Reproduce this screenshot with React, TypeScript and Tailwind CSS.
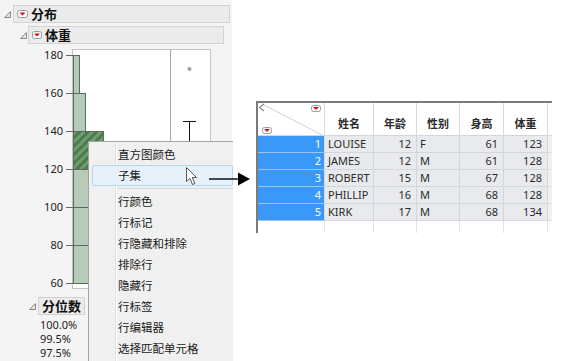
import React from 'react';

const cjk = "font-['Noto_Sans','Noto_Sans_CJK_SC',sans-serif]";

function Disclosure() {
  return (
    <svg width="7" height="7" viewBox="0 0 7 7" className="shrink-0">
      <polygon points="6.5,0.5 6.5,6.5 0.5,6.5" fill="#e4e4e4" stroke="#8a8a8a" strokeWidth="1" />
    </svg>
  );
}

function RedDrop({ w = 11, h = 8 }: { w?: number; h?: number }) {
  return (
    <svg width={w} height={h} viewBox={`0 0 ${w} ${h}`} className="shrink-0">
      <rect x="0.5" y="0.5" width={w - 1} height={h - 1} rx="2" fill="#fff" stroke="#9a9a9a" />
      <polygon points={`${w / 2 - 3},${h / 2 - 1.5} ${w / 2 + 3},${h / 2 - 1.5} ${w / 2},${h / 2 + 1.5}`} fill="#d8101a" />
    </svg>
  );
}

// plot drawn in svg coords (page y - 44)
function Plot() {
  const y = (v: number) => 283 - (v - 60) * 1.9 - 44;
  const ticks = [180, 160, 140, 120, 100, 80, 60];
  return (
    <svg width="232" height="253" className="block shrink-0">
      <defs>
        <pattern id="hatch" width="6" height="6" patternUnits="userSpaceOnUse" patternTransform="rotate(45)">
          <rect width="6" height="6" fill="#4d7a4f" />
          <rect width="3" height="6" fill="#719c71" />
        </pattern>
      </defs>
      <rect x="72.5" y="5.5" width="138" height="239" fill="#fff" stroke="#c4c4c4" />
      <line x1="170.5" y1="5" x2="170.5" y2="244" stroke="#a8a8a8" />
      {ticks.map(t => (
        <g key={t}>
          <line x1="66" y1={y(t) + 0.5} x2="73" y2={y(t) + 0.5} stroke="#666" />
          <text x="63" y={y(t) + 4} textAnchor="end" fontSize="11" fill="#222" fontFamily="Noto Sans, sans-serif">{t}</text>
        </g>
      ))}
      <g stroke="#5b6b5b" strokeWidth="1" fill="#b8cab8">
        <rect x="73.5" y={y(180) + 0.5} width="6" height={y(160) - y(180)} />
        <rect x="73.5" y={y(160) + 0.5} width="12" height={y(140) - y(160)} />
        <rect x="73.5" y={y(120) + 0.5} width="40" height={y(100) - y(120)} />
        <rect x="73.5" y={y(100) + 0.5} width="50" height={y(80) - y(100)} />
        <rect x="73.5" y={y(80) + 0.5} width="30" height={y(60) - y(80)} />
        <rect x="73.5" y={y(140) + 0.5} width="30" height={y(120) - y(140)} fill="url(#hatch)" />
      </g>
      <circle cx="189.5" cy={69 - 44} r="2" fill="#a0a0a0" />
      <line x1="183" y1={121.5 - 44} x2="196" y2={121.5 - 44} stroke="#111" />
      <line x1="189.5" y1={121 - 44} x2="189.5" y2={150 - 44} stroke="#111" />
    </svg>
  );
}

const menuItems = ['直方图颜色', '子集'];
const menuItems2 = ['行颜色', '行标记', '行隐藏和排除', '排除行', '隐藏行', '行标签', '行编辑器', '选择匹配单元格'];

function ContextMenu() {
  return (
    <div className={`absolute left-[88px] top-[141px] w-[145px] h-[220px] bg-[#f0f0f0] border-l border-t border-[#a3a3a3] pt-[2px] text-[11.5px] text-[#1a1a1a] ${cjk}`}>
      <div className="absolute left-[26px] top-0 bottom-0 w-px bg-[#e0e0e0]" />
      <div className="absolute left-[27px] top-0 bottom-0 w-px bg-white" />
      {menuItems.map((m, i) => (
        <div
          key={m}
          className={`relative h-[21px] flex items-center ml-[3px] rounded-[2px] ${i === 1 ? 'bg-[#e6f1fa] border border-[#b4d7f3] pl-[25px]' : 'pl-[26px]'}`}
        >
          {m}
        </div>
      ))}
      <div className="relative h-[5px] flex items-center pl-[29px]">
        <div className="h-px w-full bg-[#d6d6d6]" />
      </div>
      {menuItems2.map(m => (
        <div key={m} className="relative h-[21px] flex items-center pl-[29px]">
          {m}
        </div>
      ))}
    </div>
  );
}

const rows = [
  { n: 1, name: 'LOUISE', age: 12, sex: 'F', h: 61, w: 123 },
  { n: 2, name: 'JAMES', age: 12, sex: 'M', h: 61, w: 128 },
  { n: 3, name: 'ROBERT', age: 15, sex: 'M', h: 67, w: 128 },
  { n: 4, name: 'PHILLIP', age: 16, sex: 'M', h: 68, w: 128 },
  { n: 5, name: 'KIRK', age: 17, sex: 'M', h: 68, w: 134 },
];

const cols = ['姓名', '年龄', '性别', '身高', '体重'];
const colW = ['w-[49px]', 'w-[43px]', 'w-[43px]', 'w-[44px]', 'w-[44px]'];

function DataTable() {
  return (
    <div className={`ml-[24px] mt-[101px] w-[296px] border-t-2 border-l-2 border-[#7a7a7a] self-start text-[11px] text-[#2a2a2a] ${cjk}`}>
      {/* header */}
      <div className="flex h-[33px] bg-white border-b border-[#d2d5da]">
        <div className="relative w-[67px] shrink-0 border-r border-[#d9d9d9] overflow-hidden">
          <svg width="67" height="33" className="absolute left-0 top-0">
            <line x1="4" y1="1" x2="66" y2="33" stroke="#d0d0d0" />
            <polyline points="6,1 1.5,4.5 6,8" fill="none" stroke="#8a8a8a" strokeWidth="1.2" />
          </svg>
          <div className="absolute left-[53px] top-[2px]"><RedDrop w={10} h={7} /></div>
          <div className="absolute left-[4px] top-[24px]"><RedDrop w={10} h={7} /></div>
        </div>
        {cols.map((c, i) => (
          <div key={c} className={`${colW[i]} shrink-0 border-r border-[#d9d9d9] flex items-end justify-center pb-[3px] font-bold`}>
            {c}
          </div>
        ))}
        <div className="flex-1" />
      </div>
      {rows.map(r => (
        <div key={r.n} className="flex h-[17px] leading-[16px]">
          <div className="w-[67px] shrink-0 bg-[#3a98f8] border-b border-[#9cc4ec] border-r border-r-[#d9d9d9] text-white text-right pr-[3px]">{r.n}</div>
          <div className={`${colW[0]} shrink-0 bg-[#e8eaee] border-b border-r border-[#d3d6dc] pl-[3px]`}>{r.name}</div>
          <div className={`${colW[1]} shrink-0 bg-[#e8eaee] border-b border-r border-[#d3d6dc] text-right pr-[5px]`}>{r.age}</div>
          <div className={`${colW[2]} shrink-0 bg-[#e8eaee] border-b border-r border-[#d3d6dc] pl-[3px]`}>{r.sex}</div>
          <div className={`${colW[3]} shrink-0 bg-[#e8eaee] border-b border-r border-[#d3d6dc] text-right pr-[5px]`}>{r.h}</div>
          <div className={`${colW[4]} shrink-0 bg-[#e8eaee] border-b border-r border-[#d3d6dc] text-right pr-[5px]`}>{r.w}</div>
          <div className="flex-1 bg-[#eef0f2] border-b border-[#dfe1e5]" />
        </div>
      ))}
      <div className="flex h-[12px] bg-white">
        <div className="w-[67px] shrink-0 border-r border-[#e2e4e8]" />
        {colW.map((w, i) => (
          <div key={i} className={`${w} shrink-0 border-r border-[#e2e4e8]`} />
        ))}
      </div>
    </div>
  );
}

export default function App() {
  return (
    <div className="relative w-[562px] h-[361px] overflow-hidden bg-white flex">
      {/* left: distribution report */}
      <div className={`relative w-[232px] h-full shrink-0 bg-[#f4f4f4] flex flex-col ${cjk}`}>
        <div className="flex items-center pt-[5px] pl-[4px] h-[23px]">
          <Disclosure />
          <div className="ml-[2px] mr-[2px] flex-1 h-[18px] bg-[#ebebeb] border border-[#d2d2d2] flex items-center pl-[3px] gap-[3px]">
            <RedDrop w={11} h={8} />
            <span className="font-bold text-[13px] text-[#111] leading-none">分布</span>
          </div>
        </div>
        <div className="flex items-center pt-[3px] pl-[20px] h-[21px]">
          <Disclosure />
          <div className="ml-[1px] mr-[8px] flex-1 h-[18px] bg-[#ebebeb] border border-[#d2d2d2] flex items-center pl-[3px] gap-[3px]">
            <RedDrop w={10} h={8} />
            <span className="font-bold text-[13px] text-[#111] leading-none">体重</span>
          </div>
        </div>
        <Plot />
        <div className="flex items-center pl-[29px] h-[18px]">
          <Disclosure />
          <div className="ml-[2px] h-[18px] px-[3px] bg-[#ebebeb] border border-[#d2d2d2] flex items-center">
            <span className="font-bold text-[13px] text-[#111] leading-none">分位数</span>
          </div>
        </div>
        <div className="mt-[3px] pl-[40px] text-[11px] leading-[14px] text-[#222]">
          <div>100.0%</div>
          <div>99.5%</div>
          <div>97.5%</div>
        </div>
      </div>

      <DataTable />

      <ContextMenu />

      {/* cursor */}
      <svg width="13" height="19" viewBox="0 0 13 19" className="absolute left-[186px] top-[167px]">
        <path d="M0.5,0.5 L0.5,14.5 L4,11.5 L6.5,17.5 L8.8,16.5 L6.3,10.5 L10.5,10.5 Z" fill="#fff" stroke="#555" strokeWidth="1" />
      </svg>

      {/* arrow */}
      <svg width="42" height="16" className="absolute left-[209px] top-[171px]">
        <line x1="0" y1="8" x2="31" y2="8" stroke="#111" strokeWidth="1.5" />
        <polygon points="29,1.5 41,8 29,14.5" fill="#000" />
      </svg>
    </div>
  );
}
